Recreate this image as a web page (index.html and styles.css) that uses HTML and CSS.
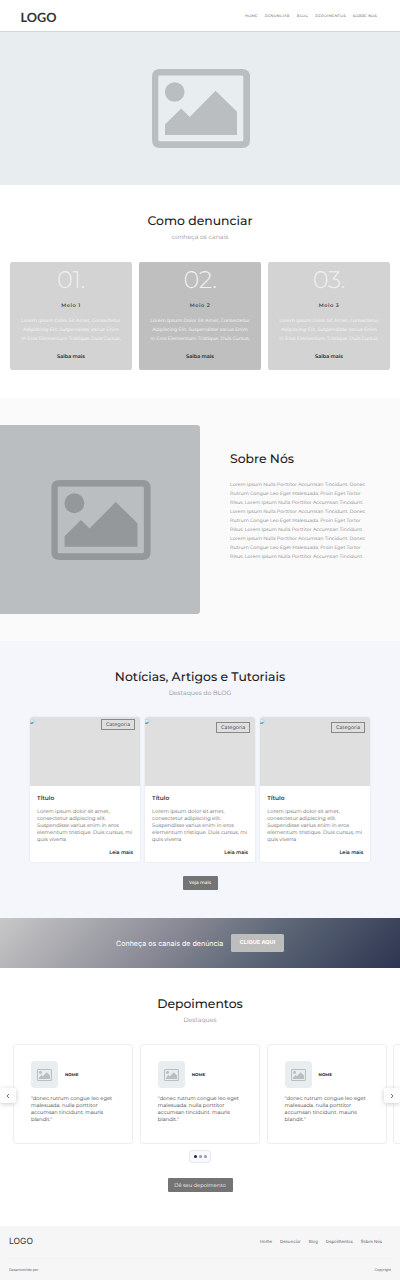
FILE: index.html
```html
<!DOCTYPE html>
<html lang="pt-BR">
<head>
<meta charset="utf-8">
<title>Como denunciar</title>
<link rel="stylesheet" href="styles.css">
</head>
<body>
<svg class="defs" width="0" height="0">
  <symbol id="picture" viewBox="0 0 98 79">
    <path fill-rule="evenodd" d="M8 0H90Q98 0 98 8V71Q98 79 90 79H8Q0 79 0 71V8Q0 0 8 0ZM7.500 6.500Q6.300 6.500 6.300 7.700V71Q6.300 72.300 7.500 72.300H90Q91.300 72.300 91.300 71V7.700Q91.300 6.500 90 6.500Z"/>
    <circle cx="22.700" cy="23" r="9.800"/>
    <path d="M13 66V55.500L29.200 39.500L37.700 48L63.600 21.700L85 42.800V66Z"/>
  </symbol>
  <symbol id="broken" viewBox="0 0 6 5">
    <path fill="#c3dbf5" d="M0 0H4L6 2V5H0Z"/>
    <path fill="#fff" d="M1 2Q2 .6 3 2V2.600H1Z"/>
    <path fill="#7fae79" d="M0 5V4L2.500 2.800L4 3.500L2.500 5Z"/>
    <path fill="#dfdfdf" d="M6 2.500V5H3Z"/>
  </symbol>
</svg>
<header class="header">
  <div class="logo">LOGO</div>
  <nav class="nav"><a>HOME</a><a>DENUNCIAR</a><a>BLOG</a><a>DEPOIMENTOS</a><a>SOBRE NÓS</a></nav>
</header>
<section class="hero"><svg><use href="#picture"/></svg></section>

<section class="report">
  <h2>Como denunciar</h2>
  <p class="sub">conheça os canais</p>
  <div class="channels">
    <article class="channel"><div class="number">01.</div><h3>Meio 1</h3><p>Lorem Ipsum Dolor Sit Amet, Consectetur<br>Adipiscing Elit. Suspendisse Varius Enim<br>In Eros Elementum Tristique. Duis Cursus,</p><a>Saiba mais</a></article>
    <article class="channel dark"><div class="number">02.</div><h3>Meio 2</h3><p>Lorem Ipsum Dolor Sit Amet, Consectetur<br>Adipiscing Elit. Suspendisse Varius Enim<br>In Eros Elementum Tristique. Duis Cursus,</p><a>Saiba mais</a></article>
    <article class="channel"><div class="number">03.</div><h3>Meio 3</h3><p>Lorem Ipsum Dolor Sit Amet, Consectetur<br>Adipiscing Elit. Suspendisse Varius Enim<br>In Eros Elementum Tristique. Duis Cursus,</p><a>Saiba mais</a></article>
  </div>
</section>

<section class="about">
  <div class="about-image"><svg><use href="#picture"/></svg></div>
  <div class="about-copy">
    <h2>Sobre Nós</h2>
    <p>Lorem Ipsum Nulla Porttitor Accumsan Tincidunt. Donec<br>Rutrum Congue Leo Eget Malesuada. Proin Eget Tortor<br>Risus. Lorem Ipsum Nulla Porttitor Accumsan Tincidunt.<br>Lorem Ipsum Nulla Porttitor Accumsan Tincidunt. Donec<br>Rutrum Congue Leo Eget Malesuada. Proin Eget Tortor<br>Risus. Lorem Ipsum Nulla Porttitor Accumsan Tincidunt.<br>Lorem Ipsum Nulla Porttitor Accumsan Tincidunt. Donec<br>Rutrum Congue Leo Eget Malesuada. Proin Eget Tortor<br>Risus. Lorem Ipsum Nulla Porttitor Accumsan Tincidunt.</p>
  </div>
</section>

<section class="blog">
  <h2>Notícias, Artigos e Tutoriais</h2>
  <p class="sub">Destaques do BLOG</p>
  <div class="posts">
    <article class="post"><div class="cover first"><svg><use href="#broken"/></svg><span>Categoria</span></div><div class="post-body"><h3>Título</h3><p>Lorem ipsum dolor sit amet,<br>consectetur adipiscing elit.<br>Suspendisse varius enim in eros<br>elementum tristique. Duis cursus, mi<br>quis viverra</p><a>Leia mais</a></div></article>
    <article class="post"><div class="cover"><svg><use href="#broken"/></svg><span>Categoria</span></div><div class="post-body"><h3>Título</h3><p>Lorem ipsum dolor sit amet,<br>consectetur adipiscing elit.<br>Suspendisse varius enim in eros<br>elementum tristique. Duis cursus, mi<br>quis viverra</p><a>Leia mais</a></div></article>
    <article class="post"><div class="cover"><svg><use href="#broken"/></svg><span>Categoria</span></div><div class="post-body"><h3>Título</h3><p>Lorem ipsum dolor sit amet,<br>consectetur adipiscing elit.<br>Suspendisse varius enim in eros<br>elementum tristique. Duis cursus, mi<br>quis viverra</p><a>Leia mais</a></div></article>
  </div>
  <a class="button more">Veja mais</a>
</section>

<section class="banner"><span>Conheça os canais de denúncia</span><a>CLIQUE AQUI</a></section>

<section class="reviews">
  <h2>Depoimentos</h2>
  <p class="sub">Destaques</p>
  <div class="slider">
    <div class="track">
      <article class="review"><div class="person"><div class="avatar"><svg><use href="#picture"/></svg></div><b>NOME</b></div><p>"donec rutrum congue leo eget<br>malesuada. nulla porttitor<br>accumsan tincidunt. mauris<br>blandit."</p></article>
      <article class="review"><div class="person"><div class="avatar"><svg><use href="#picture"/></svg></div><b>NOME</b></div><p>"donec rutrum congue leo eget<br>malesuada. nulla porttitor<br>accumsan tincidunt. mauris<br>blandit."</p></article>
      <article class="review"><div class="person"><div class="avatar"><svg><use href="#picture"/></svg></div><b>NOME</b></div><p>"donec rutrum congue leo eget<br>malesuada. nulla porttitor<br>accumsan tincidunt. mauris<br>blandit."</p></article>
      <article class="review"></article>
    </div>
    <button class="arrow prev" aria-label="Anterior"><svg viewBox="0 0 4 6"><path d="M3 1L1 3L3 5"/></svg></button>
    <button class="arrow next" aria-label="Próximo"><svg viewBox="0 0 4 6"><path d="M1 1L3 3L1 5"/></svg></button>
  </div>
  <div class="dots"><i class="active"></i><i></i><i></i></div>
  <a class="button give">Dê seu depoimento</a>
</section>

<footer class="footer">
  <div class="footer-top"><div class="footer-logo">LOGO</div><nav><a>Home</a><a>Denunciar</a><a>Blog</a><a>Depoimentos</a><a>Sobre Nós</a></nav></div>
  <div class="footer-bottom"><span>Desenvolvido por</span><span>Copyright</span></div>
</footer>
</body>
</html>
```
FILE: styles.css
```css
* { box-sizing: border-box; }
body { margin: 0; width: 400px; height: 1280px; overflow: hidden; background: #fff; color: #1d1d1f; font-family: Montserrat, Inter, sans-serif; white-space: nowrap; text-rendering: geometricPrecision; }
h2, h3, p { margin: 0; font-weight: 400; }
svg { display: block; }
.defs { display: none; }
h2 { font-size: 12.4px; line-height: 16px; font-weight: 500; text-align: center; }
.sub { margin-top: 3px; font-size: 6.2px; line-height: 8px; font-weight: 400; color: #8c8c8c; text-align: center; }

.header { height: 31px; display: flex; justify-content: space-between; padding: 9px 23px 0 20.500px; }
.logo { font: 700 12.7px/16px Lato, sans-serif; color: #333; }
.nav { display: flex; gap: 7px; padding-top: 1px; font-size: 3.5px; line-height: 12px; color: #333; letter-spacing: .3px; }
.hero { height: 154px; padding-top: 37px; background: #e8edf0; border-top: 1px solid #d3d7d9; fill: #babec1; }
.hero svg { width: 98px; height: 79px; margin-left: 152px; }

.report { height: 213px; padding: 29px 10px 0; }
.channels { display: grid; grid-template-columns: repeat(3, 122px); gap: 7px; margin-top: 21px; }
.channel { height: 108px; padding-top: 4px; border-radius: 2px; background: #d3d3d3; text-align: center; display: flex; flex-direction: column; }
.channel.dark { background: #bfbfbf; }
.number { font-size: 24px; line-height: 29px; font-weight: 300; color: #f0f0f0; letter-spacing: -.4px; }
.channel h3 { margin-top: 7px; font-size: 5.2px; line-height: 8px; font-weight: 600; letter-spacing: .5px; color: #444; }
.channel p { margin-top: 7px; font-size: 4.75px; line-height: 9px; color: #fafafa; font-weight: 400; }
.channel a { margin-top: 9px; font-size: 5px; line-height: 8px; font-weight: 600; }

.about { height: 243px; padding-top: 27px; display: flex; background: #fafafa; }
.about-image { width: 200px; height: 189px; padding: 55px 0 0 51px; border-radius: 0 3px 3px 0; background: #babec1; fill: #94989a; }
.about-image svg { width: 100px; height: 80px; }
.about-copy { padding: 27px 0 0 30px; }
.about-copy h2 { text-align: left; }
.about-copy p { margin-top: 13px; font-size: 4.75px; line-height: 8.95px; font-weight: 400; color: #808080; }

.blog { height: 277px; padding: 29px 30px 0; background: #f4f6fb; display: flex; flex-direction: column; }
.posts { display: grid; grid-template-columns: repeat(3, 110px); gap: 5.100px; margin-top: 20px; }
.post { height: 145px; border-radius: 3px; background: #fff; overflow: hidden; box-shadow: 0 0 2px #d9dce3; }
.cover { height: 69px; display: flex; justify-content: space-between; background: #dfdfdf; padding: 5px 5px 0 0; }
.cover.first { padding-top: 2px; }
.cover svg { width: 6px; height: 5px; margin-top: -3px; }
.cover.first svg { margin-top: 0; }
.cover span { width: 34px; height: 11px; border: 1px solid #888; text-align: center; font-size: 5px; line-height: 10.5px; color: #333; }
.post-body { padding: 9px 7px 0; display: flex; flex-direction: column; }
.post h3 { font-size: 5.9px; line-height: 8px; font-weight: 600; color: #333; }
.post p { margin-top: 6px; font-size: 5.15px; line-height: 6.9px; color: #5c5c5c; }
.post-body a { margin-top: 6px; align-self: flex-end; font-size: 4.9px; line-height: 7px; font-weight: 600; color: #222; }
.button { align-self: center; display: block; height: 14px; border-radius: 1px; background: #747474; color: #fff; text-align: center; line-height: 16px; }
.more { width: 35px; margin-top: 14px; font-size: 4.5px; font-weight: 500; }

.banner { height: 50px; display: flex; align-items: center; padding-left: 116px; color: #fff; font-family: Inter, sans-serif; background: linear-gradient(135deg, #c8c8c8 0%, #858692 44%, #596474 67%, #2e3551 100%); }
.banner span { width: 107.5px; font-size: 7.12px; }
.banner a { width: 53px; height: 18px; margin-left: 7.500px; border-radius: 1.500px; background: #bdbdbd; text-align: center; font-size: 5.5px; line-height: 18px; font-weight: 700; }

.reviews { height: 258px; padding-top: 29px; display: flex; flex-direction: column; }
.slider { position: relative; margin-top: 20px; height: 100px; }
.track { display: grid; grid-template-columns: repeat(4, 120px); gap: 6.800px; margin-left: 13px; width: 387px; overflow: hidden; }
.review { height: 100px; padding: 16px 17px 0; border: 1px solid #eee; border-radius: 3px; }
.person { display: flex; align-items: center; gap: 7px; font-size: 4.1px; line-height: 5px; }
.person b { padding-top: 1px; }
.avatar { width: 27px; height: 27px; border-radius: 4px; background: #e8edf0; fill: #babec1; display: grid; place-items: center; }
.avatar svg { width: 15px; height: 12px; }
.review p { margin-top: 8px; font-size: 5.15px; line-height: 6.950px; color: #333; }
.arrow { position: absolute; top: 44px; width: 16px; height: 15px; padding: 0; border: 0; background: #fff; box-shadow: 0 1px 5px #ccc; border-radius: 2px; display: grid; place-items: center; }
.prev { left: 0; }
.next { right: 0; }
.arrow svg { width: 4px; height: 6px; fill: none; stroke: #333; stroke-width: .7; }
.dots { align-self: center; width: 22px; height: 13px; margin-top: 6px; display: flex; align-items: center; justify-content: center; gap: 2px; background: #f8f8ff; border: 1px solid #e6e6f3; border-radius: 3px; }
.dots i { width: 3px; height: 3px; border-radius: 50%; background: #999; }
.dots .active { background: #222; }
.give { width: 65px; margin-top: 15px; font-size: 5.2px; }

.footer { height: 54px; padding: 8px 9px 0; background: #f6f6f6; font-family: Inter, sans-serif; color: #555b70; }
.footer-top { height: 25px; display: flex; justify-content: space-between; border-bottom: 1px solid #f2f2f2; }
.footer-logo { font-size: 8.5px; line-height: 16px; color: #333; }
.footer nav { display: flex; gap: 8px; padding-right: 9px; font-size: 4.3px; line-height: 17.5px; }
.footer-bottom { display: flex; justify-content: space-between; padding-top: 7px; font-size: 3.55px; line-height: 8px; }
```
